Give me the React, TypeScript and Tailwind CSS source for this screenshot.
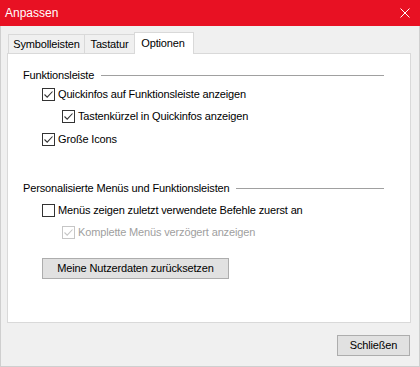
import React from 'react';

const font = { fontFamily: '"Liberation Sans", Arial, sans-serif' };

const Check = ({ checked, disabled }: { checked?: boolean; disabled?: boolean }) => (
  <span className={`w-[13px] h-[13px] border bg-white flex items-center justify-center shrink-0 ${disabled ? 'border-[#c6c6c6]' : 'border-[#333333]'}`}>
    {checked && (
      <svg width="11" height="11" viewBox="0 0 11 11">
        <path d="M1.5 5.5 L4.2 8.2 L9.5 2.5" fill="none" stroke={disabled ? '#c6c6c6' : '#333333'} strokeWidth="1.1" />
      </svg>
    )}
  </span>
);

const Row = ({ label, checked, disabled, indent, className }: { label: string; checked?: boolean; disabled?: boolean; indent?: boolean; className: string }) => (
  <div className={`h-4 flex items-center gap-[3px] ${indent ? 'pl-[54px]' : 'pl-[34px]'} ${className}`}>
    <Check checked={checked} disabled={disabled} />
    <span className={disabled ? 'text-[#a0a0a0]' : 'text-black'}>{label}</span>
  </div>
);

const Group = ({ title, className }: { title: string; className: string }) => (
  <div className={`h-4 flex items-center pl-[15px] pr-[26px] gap-[7px] ${className}`}>
    <span className="whitespace-nowrap">{title}</span>
    <div className="flex-1 h-px bg-[#a0a0a0]" />
  </div>
);

export default function App() {
  return (
    <div className="w-[420px] h-[367px] bg-[#f0f0f0] border-x border-b border-[#cfcfcf] flex flex-col text-[11px] tracking-[-0.15px] text-black" style={font}>
      <div className="h-[26px] -mx-px bg-[#e81123] flex items-center justify-between pl-[5px] pr-[10px] text-white text-[12px] tracking-normal">
        <span>Anpassen</span>
        <svg width="10" height="10" viewBox="0 0 10 10" className="mt-[-1px]">
          <path d="M0.5 0.5 L9.5 9.5 M9.5 0.5 L0.5 9.5" stroke="#ffffff" strokeWidth="1" />
        </svg>
      </div>

      <div className="ml-[6px] w-[404px] mt-[6px]">
        <div className="flex items-end pl-px h-[21px]">
          <div className="w-[77px] h-[19px] border border-b-0 border-[#d9d9d9] bg-[#f0f0f0] flex items-center justify-center">Symbolleisten</div>
          <div className="w-[51px] h-[19px] -ml-px border border-b-0 border-[#d9d9d9] bg-[#f0f0f0] flex items-center justify-center">Tastatur</div>
          <div className="w-[60px] h-[22px] -ml-px -mb-px relative z-10 border border-b-0 border-[#d9d9d9] bg-white flex items-center justify-center pr-[2px]">Optionen</div>
        </div>
        <div className="h-[270px] bg-white border border-[#d9d9d9] flex flex-col pt-[13px]">
          <Group title="Funktionsleiste" className="" />
          <Row label="Quickinfos auf Funktionsleiste anzeigen" checked className="mt-[3px]" />
          <Row label="Tastenkürzel in Quickinfos anzeigen" checked indent className="mt-[6px]" />
          <Row label="Große Icons" checked className="mt-[7px]" />
          <Group title="Personalisierte Menüs und Funktionsleisten" className="mt-[33px]" />
          <Row label="Menüs zeigen zuletzt verwendete Befehle zuerst an" className="mt-[6px]" />
          <Row label="Komplette Menüs verzögert anzeigen" checked disabled indent className="mt-[6px]" />
          <div className="pl-[34px] mt-[18px]">
            <button className="w-[187px] h-[21px] bg-[#e1e1e1] border border-[#adadad] flex items-center justify-center">Meine Nutzerdaten zurücksetzen</button>
          </div>
        </div>
      </div>

      <div className="flex justify-end mt-[12px] pr-[9px]">
        <button className="w-[73px] h-[21px] bg-[#e1e1e1] border border-[#adadad] flex items-center justify-center">Schließen</button>
      </div>
    </div>
  );
}
